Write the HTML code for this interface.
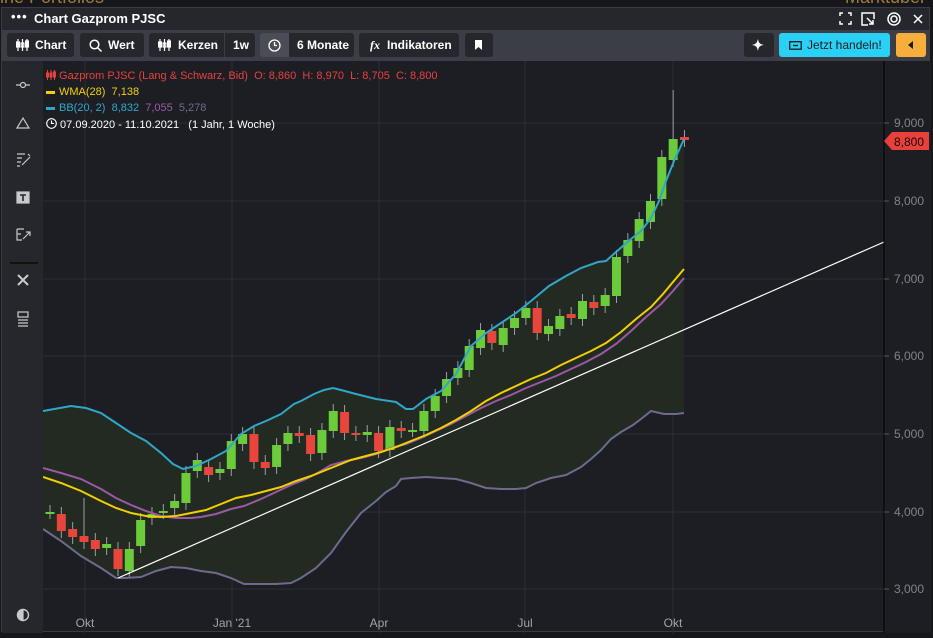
<!DOCTYPE html>
<html><head><meta charset="utf-8"><style>
*{box-sizing:border-box;margin:0;padding:0}
body{width:933px;height:632px;overflow:hidden;background:#16171b;font-family:"Liberation Sans",sans-serif;position:relative}
.bgt{position:absolute;top:-13px;font-size:18px;color:#a07a3a}
.win{position:absolute;left:1px;top:7px;width:929px;height:625px;background:#1c1e24;border:1px solid #3a3c42}
.hdr{position:absolute;left:0;top:0;width:100%;height:22px;background:#25272d;color:#fff;font-weight:bold;font-size:13px}
.tb{position:absolute;left:0;top:22px;width:100%;height:31px;background:#3b3e46}
.b{position:absolute;top:3px;height:24px;background:#25272d;border-radius:3px;color:#fff;font-size:12px;font-weight:bold;line-height:24px}
.side{position:absolute;left:0;top:53px;width:41px;height:572px;background:#25272d}
.leg{position:absolute;left:44px;font-size:11px;white-space:nowrap}
</style></head><body>
<div class="bgt" style="left:0">ine Portfolios</div>
<div class="bgt" style="left:845px">Marktüber</div>
<div class="win">
<div class="hdr"><span style="position:absolute;left:9px;top:1px;letter-spacing:1px">•••</span><span style="position:absolute;left:32px;top:3px">Chart Gazprom PJSC</span>
<svg style="position:absolute;left:836px;top:3px" width="90" height="16" fill="none" stroke="#fff" stroke-width="1.5"><path d="M2 5V2h3M10 2h3v3M13 10v3h-3M5 13H2v-3"/><path d="M30 14H24V2h12v6M29 7l6 6M35 9v4h-4"/><circle cx="56" cy="8" r="6"/><circle cx="56" cy="8" r="3"/><path d="M76 4l8 8M84 4l-8 8"/></svg></div>
<div class="tb">
<div class="b" style="left:5px;width:67px"><svg style="position:absolute;left:9px;top:6px" width="13" height="12" fill="none" stroke="#fff" stroke-width="1.2"><path d="M2 0v12M6.5 0v12M11 0v12"/><rect x="0.6" y="3" width="2.8" height="5" fill="#fff"/><rect x="5.1" y="4" width="2.8" height="4"/><rect x="9.6" y="2" width="2.8" height="6" fill="#fff"/></svg><span style="position:absolute;left:28px">Chart</span></div>
<div class="b" style="left:78px;width:64px"><svg style="position:absolute;left:9px;top:6px" width="13" height="13" fill="none" stroke="#fff" stroke-width="1.5"><circle cx="5.5" cy="5.5" r="4.3"/><path d="M8.5 8.5l4 4"/></svg><span style="position:absolute;left:28px">Wert</span></div>
<div class="b" style="left:147px;width:106px"><svg style="position:absolute;left:9px;top:6px" width="13" height="12" fill="none" stroke="#fff" stroke-width="1.2"><path d="M2 0v12M6.5 0v12M11 0v12"/><rect x="0.6" y="3" width="2.8" height="5" fill="#fff"/><rect x="5.1" y="4" width="2.8" height="4"/><rect x="9.6" y="2" width="2.8" height="6" fill="#fff"/></svg><span style="position:absolute;left:29px">Kerzen</span><span style="position:absolute;left:75px;top:0;width:1px;height:24px;background:#3b3e46"></span><span style="position:absolute;left:84px">1w</span></div>
<div class="b" style="left:258px;width:94px"><span style="position:absolute;left:0;top:0;width:29px;height:24px;background:#4a4d55;border-radius:3px 0 0 3px"></span><svg style="position:absolute;left:8px;top:6px" width="13" height="13" fill="none" stroke="#fff" stroke-width="1.3"><circle cx="6.5" cy="6.5" r="5.5"/><path d="M6.5 3v3.5h2.5"/></svg><span style="position:absolute;left:37px">6 Monate</span></div>
<div class="b" style="left:357px;width:100px"><i style="position:absolute;left:11px;font-family:'Liberation Serif',serif">fx</i><span style="position:absolute;left:28px">Indikatoren</span></div>
<div class="b" style="left:463px;width:28px"><svg style="position:absolute;left:10px;top:7px" width="8" height="10"><path d="M0 0h7v10L3.5 7 0 10z" fill="#fff"/></svg></div>
<div class="b" style="left:742px;width:30px"><span style="position:absolute;left:8px;top:0;font-size:14px">✦</span></div>
<div class="b" style="left:777px;width:111px;background:#2ad0f5;color:#1a1c22;font-weight:normal"><svg style="position:absolute;left:10px;top:8px" width="13" height="9" fill="none" stroke="#1a1c22" stroke-width="1.3"><rect x="0.7" y="0.7" width="11.5" height="7.5"/><path d="M4 4.5h5"/></svg><span style="position:absolute;left:28px">Jetzt handeln!</span></div>
<div class="b" style="left:894px;width:30px;background:#f8ae3a"><svg style="position:absolute;left:12px;top:8px" width="6" height="9"><path d="M5 0v8L0 4z" fill="#1a1c22"/></svg></div>
</div>
<div class="side">
<svg width="41" height="572" fill="none" stroke="#c8c9cc" stroke-width="1.2">
<path d="M14 24h4M24 24h4"/><circle cx="21" cy="24" r="2.5"/>
<path d="M21 57l-6 10h12z"/>
<path d="M15 93h8M15 97h5M15 101h4M15 105h3M20 104l8-8M26 93l2 2"/>
<rect x="15" y="131" width="12" height="11" fill="#c8c9cc"/><path d="M18 134h6M21 134v6" stroke="#25272d" stroke-width="1.6"/>
<path d="M15 168h7M15 168v11h5M15 173h4M15 179h0M21 178l7-7M24 171h4v4"/>
<path d="M8 202h28" stroke="#111" stroke-width="2"/>
<path d="M16 214l10 10M26 214l-10 10" stroke-width="2"/>
<path d="M16 251h10v5H16zM16 259h10M16 262h10M16 265h10"/>
<circle cx="21" cy="554" r="5.5" stroke-width="1.4"/><path d="M21 548.5a5.5 5.5 0 0 0 0 11z" fill="#c8c9cc"/>
</svg>
</div>
<svg style="position:absolute;left:41px;top:53px" width="888" height="572" id="c"></svg>
<div class="leg" style="top:62px;color:#e8413c"><svg width="10" height="10" style="vertical-align:-1px" fill="none" stroke="#e8413c"><path d="M1.5 0v10M5 0v10M8.5 0v10"/><rect x="0.5" y="3" width="2" height="4" fill="#e8413c"/><rect x="4" y="3" width="2" height="4"/><rect x="7.5" y="2" width="2" height="5" fill="#e8413c"/></svg> Gazprom PJSC (Lang &amp; Schwarz, Bid)&nbsp; O: 8,860&nbsp; H: 8,970&nbsp; L: 8,705&nbsp; C: 8,800</div>
<div class="leg" style="top:78px;color:#f2d000"><span style="display:inline-block;width:9px;height:3px;background:#f2d000;vertical-align:middle;margin-right:4px"></span>WMA(28)&nbsp; 7,138</div>
<div class="leg" style="top:94px;color:#2fa7c9"><span style="display:inline-block;width:9px;height:3px;background:#2fa7c9;vertical-align:middle;margin-right:4px"></span>BB(20, 2)&nbsp; 8,832 <span style="color:#9b59a5">&nbsp;7,055</span> <span style="color:#6e6a8c">&nbsp;5,278</span></div>
<div class="leg" style="top:110px;color:#fff"><svg width="11" height="11" style="vertical-align:-1px" fill="none" stroke="#fff" stroke-width="1.1"><circle cx="5.5" cy="5.5" r="4.8"/><path d="M5.5 2.5v3h2.5"/></svg> 07.09.2020 - 11.10.2021&nbsp;&nbsp; (1 Jahr, 1 Woche)</div>
</div>
<script>
var s=document.getElementById('c'),ox=42,oy=60,h='';
function P(a){return a.map(function(p){return (p[0]-ox)+','+(p[1]-oy)}).join(' ')}
[122,200,278,355,433,511,588].forEach(function(y){h+='<line x1="0" x2="842" y1="'+(y-oy)+'" y2="'+(y-oy)+'" stroke="#2b2e35"/>'});
[84,231,378,524,672].forEach(function(x){h+='<line y1="0" y2="572" x1="'+(x-ox)+'" x2="'+(x-ox)+'" stroke="#2b2e35"/>'});
var up=[[42,410],[70,405],[85,407],[100,412],[112,420],[130,432],[145,440],[160,452],[172,463],[182,468],[195,465],[210,458],[225,450],[240,433],[253,425],[265,420],[280,413],[293,403],[300,400],[313,393],[323,389],[332,387],[340,389],[355,393],[375,398],[395,401],[405,408],[412,408],[425,398],[440,390],[455,373],[470,345],[485,332],[500,322],[515,312],[530,300],[548,285],[565,275],[580,267],[597,261],[605,260],[615,251],[630,238],[640,230],[650,217],[658,200],[665,180],[673,160],[683,138]];
var lo=[[42,528],[60,540],[80,555],[100,567],[115,577],[125,577],[140,576],[155,570],[170,566],[185,567],[200,570],[215,572],[230,577],[243,583],[260,583],[275,583],[290,582],[300,577],[315,567],[330,552],[345,531],[360,512],[375,500],[385,491],[395,485],[400,478],[410,477],[425,476],[440,477],[455,478],[470,482],[485,487],[500,488],[515,488],[525,487],[535,482],[550,477],[565,474],[580,466],[590,458],[600,449],[610,438],[620,431],[632,424],[640,418],[650,410],[663,413],[675,413],[683,412]];
var mi=[[42,467],[60,472],[80,478],[100,488],[115,497],[130,504],[145,510],[160,515],[175,517],[190,517],[200,516],[215,513],[230,508],[243,505],[260,498],[275,491],[290,484],[305,478],[320,470],[330,464],[345,460],[360,457],[375,453],[390,447],[405,443],[420,437],[435,430],[450,423],[465,415],[480,407],[495,400],[510,394],[525,387],[540,381],[555,375],[570,368],[585,361],[600,353],[615,343],[630,330],[645,316],[660,303],[672,290],[683,277]];
var wm=[[42,476],[60,482],[80,490],[100,500],[115,507],[130,512],[145,515],[160,516],[175,515],[190,512],[205,509],[220,503],[235,497],[250,494],[265,490],[280,486],[295,480],[310,475],[325,469],[335,465],[350,459],[365,455],[380,451],[395,446],[410,440],[425,434],[440,427],[455,419],[470,410],[485,400],[500,392],[515,385],[530,378],[545,372],[560,364],[575,357],[590,350],[605,342],[620,331],[635,318],[650,306],[662,293],[672,281],[683,268]];
h+='<polygon points="'+P(up.concat(lo.slice().reverse()))+'" fill="#222a21"/>';
var c=[[511,511,'g'],[513,530,'r'],[528,536,'r'],[535,541,'r',497],[539,548,'r'],[547,543,'g'],[548,568,'r'],[570,548,'g'],[545,519,'g'],[517,513,'g'],[511,510,'g'],[507,500,'g'],[502,472,'g'],[470,459,'g'],[466,474,'r'],[472,468,'g'],[468,440,'g'],[443,433,'g'],[433,461,'r'],[461,467,'r'],[466,444,'g'],[443,432,'g'],[432,435,'r'],[434,453,'r'],[452,429,'g'],[430,410,'g'],[411,432,'r'],[432,433,'r'],[434,431,'g'],[432,450,'r'],[449,426,'g'],[427,430,'r'],[429,429,'g'],[430,410,'g'],[410,395,'g'],[395,378,'g'],[377,367,'g'],[369,345,'g'],[347,329,'g'],[330,342,'r'],[344,327,'g'],[327,317,'g'],[317,307,'g'],[307,332,'r'],[333,325,'g'],[328,315,'g'],[313,317,'r'],[318,300,'g'],[301,307,'r'],[305,294,'g'],[295,256,'g'],[255,239,'g'],[240,218,'g'],[221,200,'g'],[198,156,'g'],[159,138,'g',89],[136,139,'r']];
c.forEach(function(d,i){var x=49+i*11.33-ox,t=Math.min(d[0],d[1]),b=Math.max(d[0],d[1]),col=d[2]=='g'?'#6bcb3a':'#e8453c',hi=d[3]||t-7;
h+='<line x1="'+x+'" x2="'+x+'" y1="'+(hi-oy)+'" y2="'+(b+7-oy)+'" stroke="#9aa0a6" stroke-width="1"/>';
h+='<rect x="'+(x-4.5)+'" y="'+(t-oy)+'" width="9" height="'+Math.max(b-t,2)+'" fill="'+col+'"/>';});
h+='<polyline points="'+P(lo)+'" fill="none" stroke="#6e6a8c" stroke-width="2"/>';
h+='<polyline points="'+P(mi)+'" fill="none" stroke="#9b59a5" stroke-width="2"/>';
h+='<polyline points="'+P(wm)+'" fill="none" stroke="#f2d000" stroke-width="2"/>';
h+='<polyline points="'+P(up)+'" fill="none" stroke="#2fa7c9" stroke-width="2"/>';
h+='<line x1="'+(117-ox)+'" y1="'+(577-oy)+'" x2="'+(883-ox)+'" y2="'+(241-oy)+'" stroke="#fff" stroke-width="1.2"/>';
h+='<rect x="'+(883-ox)+'" y="0" width="50" height="572" fill="#1c1e24"/><line x1="'+(883-ox)+'" x2="'+(883-ox)+'" y1="0" y2="572" stroke="#000"/>';
[['9,000',122],['8,000',200],['7,000',278],['6,000',355],['5,000',433],['4,000',511],['3,000',588]].forEach(function(a){h+='<line x1="'+(883-ox)+'" x2="'+(888-ox)+'" y1="'+(a[1]-oy)+'" y2="'+(a[1]-oy)+'" stroke="#555"/><text x="'+(893-ox)+'" y="'+(a[1]-oy+4)+'" fill="#80838a" font-size="12" font-family="Liberation Sans">'+a[0]+'</text>'});
h+='<polygon points="'+(883-ox)+','+(140-oy)+' '+(891-ox)+','+(131-oy)+' '+(928-ox)+','+(131-oy)+' '+(928-ox)+','+(149-oy)+' '+(891-ox)+','+(149-oy)+'" fill="#e8413c"/><text x="'+(893-ox)+'" y="'+(145-oy)+'" fill="#1a0000" font-size="12" font-family="Liberation Sans">8,800</text>';
[['Okt',84],['Jan \'21',231],['Apr',378],['Jul',524],['Okt',672]].forEach(function(a){h+='<text x="'+(a[1]-ox)+'" y="'+(626-oy)+'" fill="#a0a3a8" font-size="12" text-anchor="middle" font-family="Liberation Sans">'+a[0]+'</text>'});
s.innerHTML=h;
</script>
</body></html>
